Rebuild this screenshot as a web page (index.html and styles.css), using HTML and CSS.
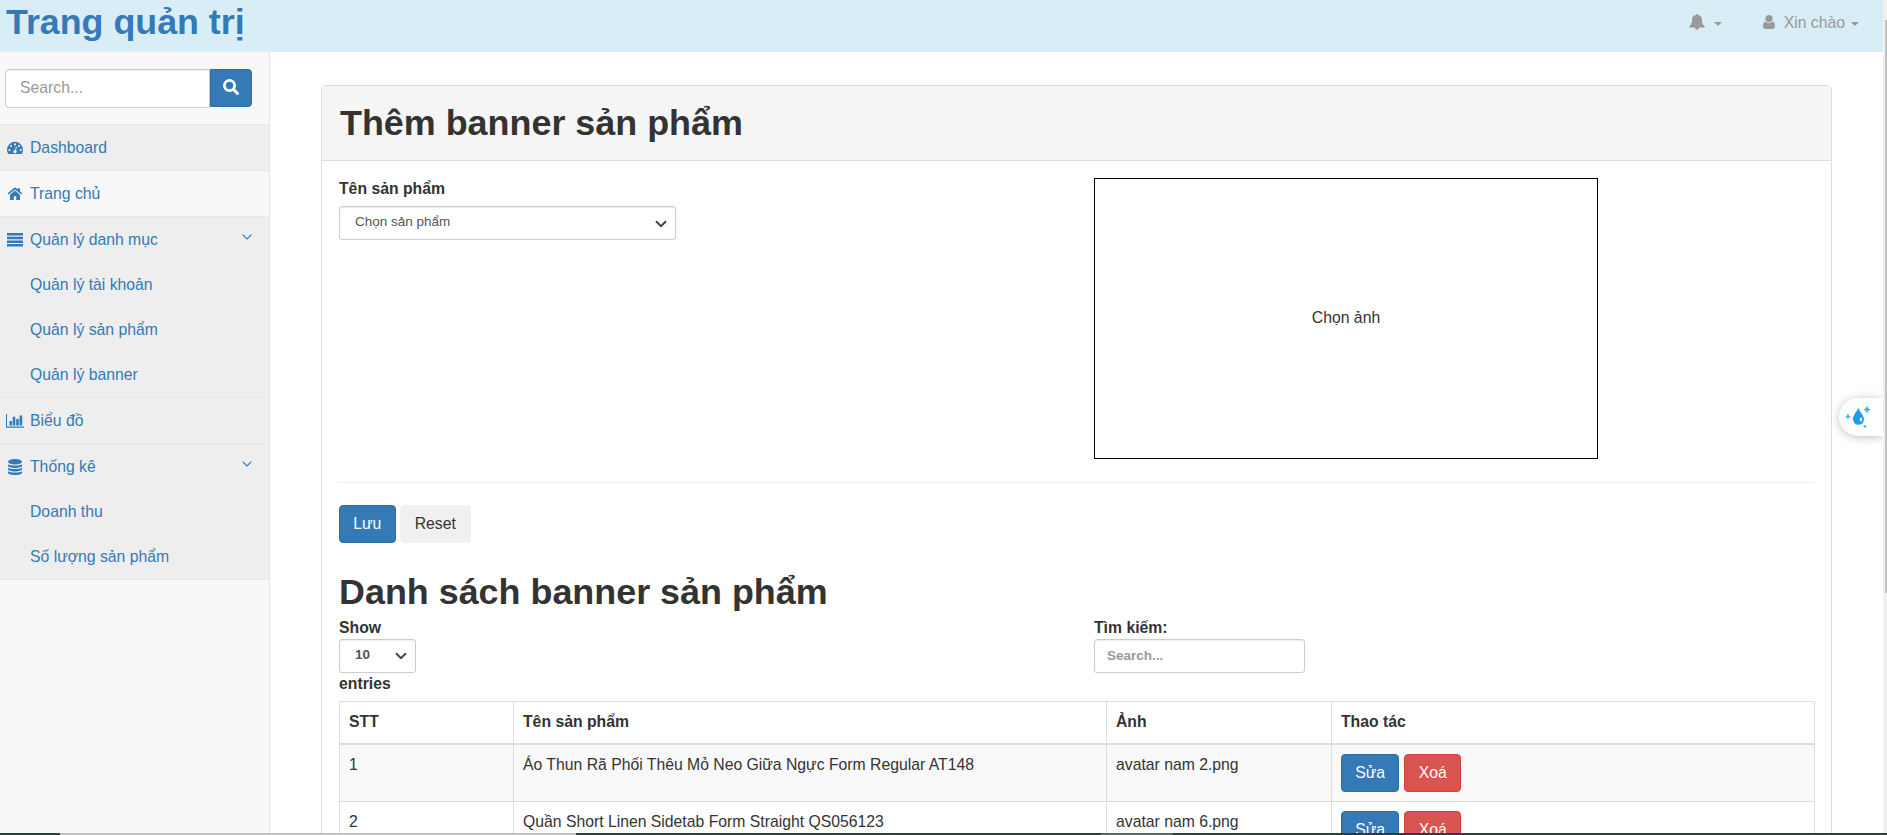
FILE: index.html
```html
<!DOCTYPE html>
<html lang="vi">
<head>
<meta charset="utf-8">
<title>Trang quản trị</title>
<link rel="stylesheet" href="styles.css">
</head>
<body>
<header class="topbar">
  <a class="brand">Trang quản trị</a>
  <div class="top-links">
    <a class="top-link"><svg class="bell" viewBox="0 0 16 16"><path d="M8 0.1c.6 0 1 .4 1 .9 2.500.5 4 2.200 4 4.800 0 3.400.8 5.200 2.700 6.500v1.300H.3v-1.300C2.200 11 3 9.200 3 5.800 3 3.200 4.500 1.500 7 1c0-.5.4-.9 1-.9zM6 13.600h4c0 1.300-.9 2.200-2 2.200s-2-.9-2-2.200z"/></svg><i class="caret"></i></a>
    <a class="top-link user"><svg class="person" viewBox="0 0 12 14"><circle cx="6" cy="3.600" r="3.600"/><path d="M2.700 6.400C3.500 7.400 4.600 8 6 8s2.500-.6 3.300-1.600C11.300 6.600 12 8.500 12 11.200c0 1.700-.9 2.800-2.500 2.800h-7C.9 14 0 12.900 0 11.200c0-2.700.7-4.600 2.700-4.800z"/></svg><span>Xin chào</span><i class="caret"></i></a>
  </div>
</header>
<div class="layout">
  <nav class="sidebar">
    <div class="search">
      <input class="search-input" placeholder="Search...">
      <button class="search-btn"><svg viewBox="0 0 16 16"><circle cx="6.500" cy="6.500" r="5.100" fill="none" stroke="#fff" stroke-width="2.800"/><path d="M10.500 10.500l3.900 3.900" stroke="#fff" stroke-width="3.100" stroke-linecap="round"/></svg></button>
    </div>
    <ul class="menu">
      <li class="group shaded"><a class="item"><svg class="ico" viewBox="0 0 16 14"><path fill-rule="evenodd" d="M8 .8a8 8 0 0 1 8 8c0 1.600-.4 3-1.200 4.200H1.200A8 8 0 0 1 0 8.800a8 8 0 0 1 8-8zM2.400 8a1.100 1.100 0 1 0 0 2.200 1.100 1.100 0 0 0 0-2.200zM4 4a1.100 1.100 0 1 0 0 2.200A1.100 1.100 0 0 0 4 4zm4-1.700a1.100 1.100 0 1 0 0 2.200 1.100 1.100 0 0 0 0-2.200zM12 4a1.100 1.100 0 1 0 0 2.200A1.100 1.100 0 0 0 12 4zm1.700 4a1.100 1.100 0 1 0 0 2.200 1.100 1.100 0 0 0 0-2.200zM9 5.600l-.9 3.300a1.700 1.700 0 1 0 .9.300l.9-3.300z"/></svg>Dashboard</a></li>
      <li class="group"><a class="item"><svg class="ico" viewBox="0 0 16 14"><path d="M8 3.600l5 4.200V12.400c0 .4-.2.600-.6.600H9.200V9.300H6.800V13H3.600c-.4 0-.6-.2-.6-.6V7.800zM8 .700c.4 0 .7.100 1 .4l1.800 1.500V1.200h2.200v3.200l2.300 1.900-.9 1.100L8 2.500 1.600 7.400.7 6.300 7 1.100c.3-.3.600-.4 1-.4z"/></svg>Trang chủ</a></li>
      <li class="group shaded"><a class="item"><svg class="ico bars" viewBox="0 0 16 14"><path d="M0 0h16v2.500H0zM0 3.700h16v2.500H0zM0 7.400h16v2.500H0zM0 11.100h16v2.500H0z"/></svg>Quản lý danh mục<svg class="arrow" viewBox="0 0 10 6"><path d="M.6.600L5 5 9.400.600"/></svg></a>
        <a class="item sub">Quản lý tài khoản</a><a class="item sub">Quản lý sản phẩm</a><a class="item sub">Quản lý banner</a></li>
      <li class="group shaded"><a class="item"><svg class="ico wide" viewBox="0 0 18 14"><path d="M0 0h1v12.600h17v1.200H0zM3.500 7H6v4.500H3.500zM6.700 2.800h2.600v8.700H6.700zM10.200 5h2.600v6.500h-2.600zM13.600 1.500h2.600v10h-2.600z"/></svg>Biểu đồ</a></li>
      <li class="group shaded"><a class="item"><svg class="ico db" viewBox="0 0 14 16"><ellipse cx="7" cy="2.800" rx="7" ry="2.800"/><path d="M0 5.200c1.400 1 4 1.400 7 1.400s5.600-.4 7-1.400v1.500c0 1.300-3.100 2.200-7 2.200s-7-.9-7-2.200zM0 8.700c1.400 1 4 1.400 7 1.400s5.600-.4 7-1.400v1.500c0 1.300-3.100 2.200-7 2.200s-7-.9-7-2.200zM0 12.200c1.400 1 4 1.400 7 1.400s5.600-.4 7-1.400v1.500C14 15 10.900 16 7 16s-7-1-7-2.300z"/></svg>Thống kê<svg class="arrow" viewBox="0 0 10 6"><path d="M.6.600L5 5 9.400.600"/></svg></a>
        <a class="item sub">Doanh thu</a><a class="item sub">Số lượng sản phẩm</a></li>
    </ul>
  </nav>
  <main class="content">
    <section class="panel">
      <div class="panel-head"><h1>Thêm banner sản phẩm</h1></div>
      <div class="panel-body">
        <div class="cols form-cols">
          <div>
            <label class="field-label">Tên sản phẩm</label>
            <div class="select product">Chọn sản phẩm<svg class="chev" viewBox="0 0 12 8"><path d="M1 1.200l5 5 5-5"/></svg></div>
          </div>
          <div class="picture">Chọn ảnh</div>
        </div>
        <hr>
        <div class="actions"><button class="btn primary">Lưu</button><button class="btn plain">Reset</button></div>
        <h1 class="list-title">Danh sách banner sản phẩm</h1>
        <div class="cols tools">
          <div><b>Show</b><div class="select length">10<svg class="chev" viewBox="0 0 12 8"><path d="M1 1.200l5 5 5-5"/></svg></div><b>entries</b></div>
          <div><b>Tìm kiếm:</b><input class="filter" placeholder="Search..."></div>
        </div>
        <table>
          <colgroup><col class="c1"><col class="c2"><col class="c3"><col></colgroup>
          <thead><tr><th>STT</th><th>Tên sản phẩm</th><th>Ảnh</th><th>Thao tác</th></tr></thead>
          <tbody>
            <tr><td>1</td><td>Áo Thun Rã Phối Thêu Mỏ Neo Giữa Ngực Form Regular AT148</td><td>avatar nam 2.png</td><td><div class="actions"><button class="btn primary">Sửa</button><button class="btn danger">Xoá</button></div></td></tr>
            <tr><td>2</td><td>Quần Short Linen Sidetab Form Straight QS056123</td><td>avatar nam 6.png</td><td><div class="actions"><button class="btn primary">Sửa</button><button class="btn danger">Xoá</button></div></td></tr>
          </tbody>
        </table>
      </div>
    </section>
  </main>
</div>
<div class="widget"><svg viewBox="0 0 28 26"><path class="drop" d="M14.500 3C12 7.500 9 10.500 9 14.300a5.500 5.500 0 0 0 11 0C20 10.500 16 7.500 14.500 3z"/><ellipse cx="17" cy="14.500" rx="1.200" ry="2" fill="#fff"/><path class="spark" d="M23 .5q.7 3.300 4 4-3.300.7-4 4-.7-3.300-4-4 3.300-.7 4-4zM4 8.500q.5 2.500 3 3-2.500.5-3 3-.5-2.500-3-3 2.500-.5 3-3zM21 19.500q.3 1.700 2 2-1.700.3-2 2-.3-1.700-2-2 1.700-.3 2-2z"/></svg></div>
<div class="scroll"><div class="thumb"></div></div>
<div class="edge"><div class="edge-grey"></div><div class="edge-mid"></div></div>
</body>
</html>
```

FILE: styles.css
```css
* { box-sizing: border-box; }
html, body { margin: 0; height: 835px; overflow: hidden; }
body {
  font: 15.75px/22.5px "Liberation Sans", Arial, sans-serif;
  color: #333;
  background: #fff;
  position: relative;
}
input, button { font: inherit; margin: 0; }
h1 { margin: 0; font-size: 35.900px; line-height: 44.500px; font-weight: 700; }
.topbar { height: 52px; background: #d9edf7; display: flex; justify-content: space-between; }
.brand { color: #337ab7; font-size: 35.800px; font-weight: 700; line-height: 45px; padding-left: 6px; }
.top-links { display: flex; align-items: center; height: 46px; padding-right: 28px; color: #999; gap: 41px; }
.top-link { display: flex; align-items: center; }
.top-link svg { fill: #999; display: block; margin-top: -2px; }
.bell { width: 16px; height: 16px; margin-right: 9px; }
.person { width: 12px; height: 14px; margin-right: 9px; }
.caret { border: 4px solid transparent; border-top-color: #999; border-bottom: 0; margin-top: 2px; }
.user .caret { margin-left: 6px; }
.layout { display: flex; height: 783px; }
.sidebar { width: 270px; background: #f8f8f8; border-right: 1px solid #e7e7e7; }
.search { display: flex; padding: 17px 17px 0 5px; height: 73px; border-bottom: 1px solid #e7e7e7; }
.search-input { flex: 1; min-width: 0; height: 39px; border: 1px solid #ccc; border-radius: 4px 0 0 4px; padding: 0 14px 2px; background: #fff; box-shadow: inset 0 1px 1px rgba(0,0,0,.075); }
::placeholder { color: #999; opacity: 1; }
.search-btn { width: 42px; height: 38px; padding: 0; border: 1px solid #2e6da4; border-radius: 0 4px 4px 0; background: #337ab7; }
.search-btn svg { width: 16px; height: 16px; display: block; margin: -2px auto 0; }
.menu { list-style: none; margin: 0; padding: 0; color: #337ab7; }
.group { border-bottom: 1px solid #e7e7e7; }
.shaded { background: #eee; }
.item { display: flex; align-items: center; height: 45px; padding: 1px 17px 0 7px; }
.sub { padding-left: 30px; }
.ico { width: 16px; height: 14px; margin-right: 7px; fill: #337ab7; }
.bars { margin-top: -1px; }
.wide { width: 18px; margin: 0 6px 0 -1px; }
.db { width: 14px; height: 16px; margin: 0 8px 0 1px; }
.arrow { width: 10px; height: 6px; margin: -7px 0 0 auto; fill: none; stroke: #337ab7; stroke-width: 1.200; }
.content { flex: 1; padding: 33px 55px 0 51px; min-width: 0; }
.panel { border: 1px solid #ddd; border-radius: 4px; height: 900px; }
.panel-head { background: #f5f5f5; height: 75px; padding: 15px 18px; border-bottom: 1px solid #ddd; }
.panel-body { padding: 17px 16px 0 17px; }
.cols { display: grid; grid-template-columns: 755px 1fr; }
.field-label { display: block; font-weight: 700; margin-bottom: 7px; line-height: 21px; }
.select { position: relative; display: flex; align-items: center; height: 34px; border: 1px solid #ccc; border-radius: 3px; padding: 0 15px 1px; font-size: 13.500px; color: #555; box-shadow: inset 0 1px 1px rgba(0,0,0,.075); }
.product { width: 337px; }
.chev { width: 12px; height: 8px; margin: 2px -7px 0 auto; fill: none; stroke: #444; stroke-width: 2; }
.picture { width: 504px; height: 281px; border: 1px solid #000; display: flex; align-items: center; justify-content: center; padding-bottom: 1px; }
hr { border: 0; border-top: 1px solid #eee; margin: 23px 0 22px; }
.actions { display: flex; gap: 4px; }
.btn { height: 38px; border: 1px solid; border-radius: 4px; padding: 0 13.300px; }
.primary { background: #337ab7; border-color: #2e6da4; color: #fff; }
.danger { background: #d9534f; border-color: #d43f3a; color: #fff; }
.plain { background: #f0f0f0; border-color: #f0f0f0; color: #333; padding: 0 14px; }
.list-title { margin-top: 27px; }
.tools { font-weight: 700; }
.tools b { display: block; line-height: 22px; }
.tools > div { padding-top: 2px; }
.length { width: 77px; }
.filter { display: block; width: 211px; height: 34px; border: 1px solid #ccc; border-radius: 3px; padding: 0 12px; font-size: 13.500px; font-weight: 700; box-shadow: inset 0 1px 1px rgba(0,0,0,.075); }
table { border-collapse: collapse; table-layout: fixed; width: 100%; margin-top: 6px; }
.c1 { width: 174px; }
.c2 { width: 593px; }
.c3 { width: 225px; }
th, td { border: 1px solid #ddd; text-align: left; vertical-align: top; padding: 9px; }
th { height: 43px; border-bottom-width: 2px; }
td { height: 57px; }
tbody tr:first-child { background: #f9f9f9; }
td .btn { display: block; }
td .actions { gap: 5px; }
.widget { position: absolute; right: 4px; top: 398px; width: 44px; height: 38px; border-radius: 19px 0 0 19px; background: #fff; box-shadow: 0 1px 10px rgba(0,0,0,.25); clip-path: inset(-20px 0 -20px -20px); }
.widget svg { width: 28px; height: 26px; margin: 7px 0 0 5px; display: block; }
.drop { fill: #1b9cf0; }
.spark { fill: #3db2f5; }
.scroll { position: absolute; right: 0; top: 0; width: 4px; height: 835px; background: #f1f1f1; padding: 20px 0 0 2px; }
.thumb { height: 573px; background: #c1c1c1; }
.edge { position: absolute; left: 0; bottom: 0; width: 100%; height: 2px; background: #2e3d38; padding-left: 60px; display: flex; gap: 525px; }
.edge-grey { width: 516px; height: 2px; background: #c1c1c1; }
.edge-mid { width: 72px; height: 2px; background: #5c6663; }
```
